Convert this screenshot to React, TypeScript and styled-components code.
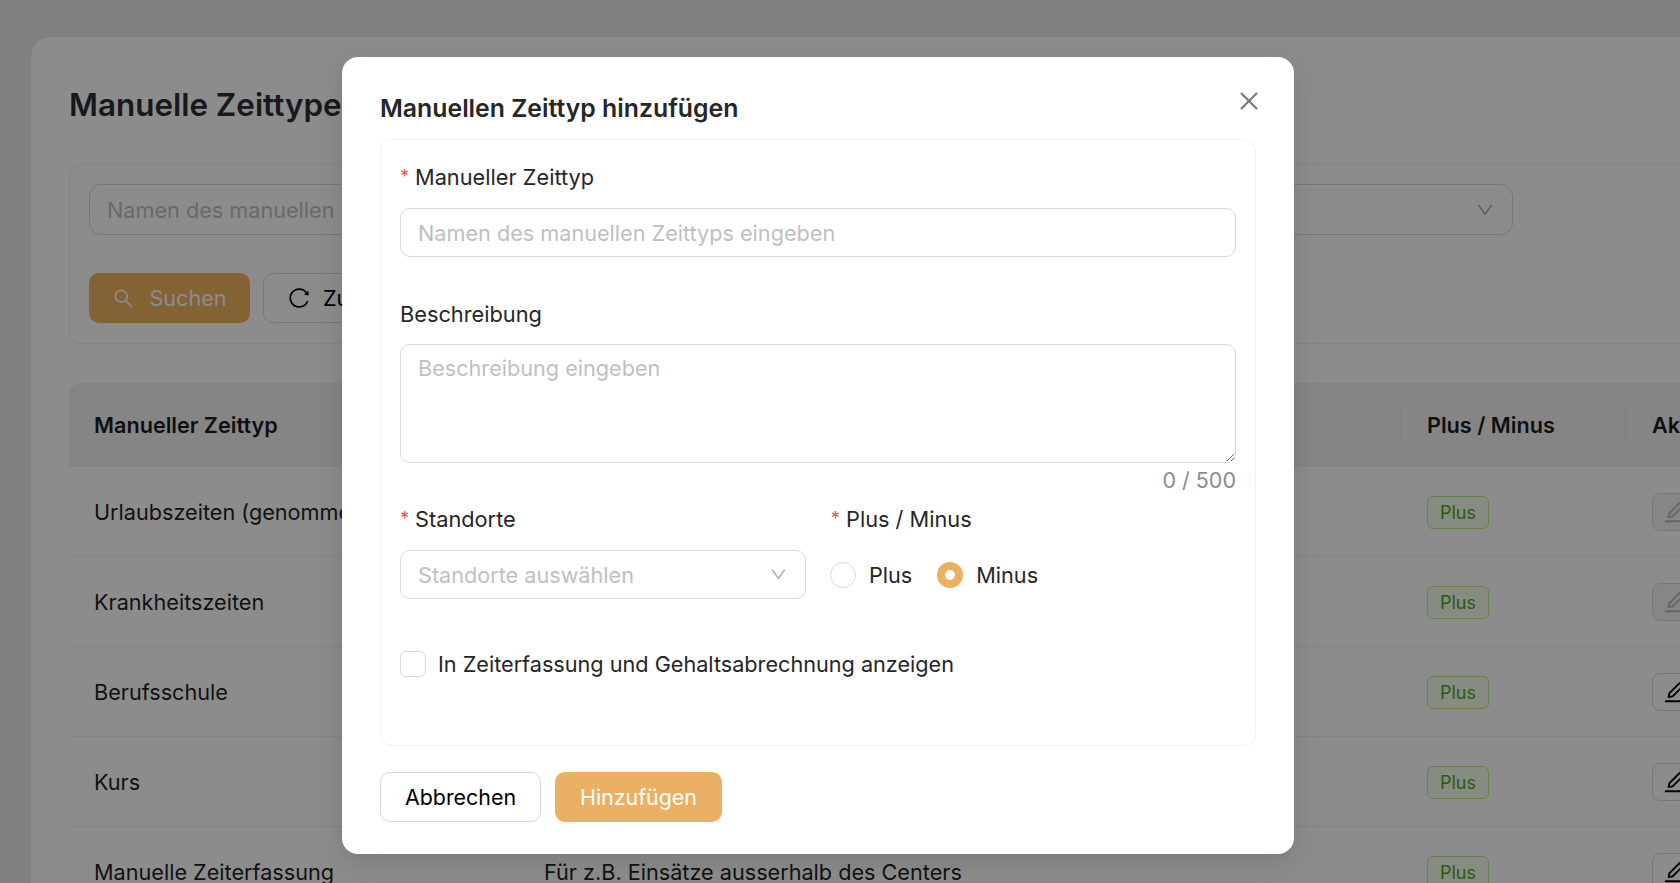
import React from 'react';
import styled, { createGlobalStyle } from 'styled-components';
import { AiOutlineClose, AiOutlineDown, AiOutlineEdit, AiOutlineReload, AiOutlineSearch } from 'react-icons/ai';

const Global = createGlobalStyle`
  html, body { margin: 0; padding: 0; height: 883px; overflow: hidden; background: #e9e9e9; }
  * { box-sizing: border-box; }
  body { font-family: Inter, "Noto Sans", "Liberation Sans", sans-serif; color: #1f1f1f; -webkit-font-smoothing: antialiased; }
  #root { width: 1680px; height: 883px; overflow: hidden; position: relative; }
`;

const Page = styled.main`
  width: 1900px;
  padding: 37px 0 0 31px;
`;
const Card = styled.section`
  background: #fff;
  border-radius: 20px;
  padding: 0 0 0 38px;
  height: 900px;
`;
const PageTitle = styled.h1`
  margin: 0;
  padding: 48px 0 0;
  height: 127px;
  font-size: 31.4px;
  line-height: 40px;
  font-weight: 600;
  color: #2b2f36;
`;
const FilterBox = styled.div`
  height: 180px;
  width: 1800px;
  border: 1px solid #f0f0f0;
  border-radius: 12px;
  padding: 19px;
  display: flex;
  flex-direction: column;
  gap: 38px;
`;
const FilterRow = styled.div`
  display: flex;
  gap: 13px;
  align-items: center;
`;
const FilterSelectSlot = styled.div`
  width: 1424px;
  height: 51px;
  border: 1px solid #d9d9d9;
  border-radius: 12px;
  display: flex;
  align-items: center;
  justify-content: space-between;
  padding: 0 17px;
  font-size: 21.65px;
  color: #bfbfbf;
  svg { width: 20px; height: 20px; color: #a8a8a8; }
`;
const PrimaryPageButton = styled.button`
  width: 161px;
  height: 50px;
  border: 0;
  border-radius: 10px;
  background: #eeb25f;
  color: #fff;
  font: inherit;
  font-size: 21.65px;
  display: flex;
  align-items: center;
  justify-content: center;
  gap: 14px;
  svg { width: 23px; height: 23px; }
`;
const GhostPageButton = styled.button`
  width: 240px;
  height: 50px;
  border: 1px solid #d9d9d9;
  border-radius: 10px;
  background: #fff;
  color: #000;
  font: inherit;
  font-size: 21.65px;
  white-space: nowrap;
  display: flex;
  align-items: center;
  gap: 12px;
  padding: 0 23px;
  svg { width: 24px; height: 24px; flex-shrink: 0; }
`;
const Table = styled.div`
  margin-top: 39px;
  width: 1800px;
`;
const columns = '450px 883px 225px 243px';
const HeadRow = styled.div`
  display: grid;
  grid-template-columns: ${columns};
  height: 84px;
  align-items: center;
  background: #f3f3f3;
  border-bottom: 1px solid #eee;
  border-radius: 12px 12px 0 0;
  font-size: 21.65px;
  font-weight: 600;
  color: #1c1c1c;
`;
const HeadCell = styled.div<{ $divider?: boolean }>`
  padding-left: 25px;
  position: relative;
  &::before {
    content: '';
    display: ${p => (p.$divider ? 'block' : 'none')};
    position: absolute;
    left: -2px;
    top: 50%;
    width: 1px;
    height: 36px;
    margin-top: -18px;
    background: #e6e6e6;
  }
`;
const Row = styled.div`
  display: grid;
  grid-template-columns: ${columns};
  height: 90px;
  align-items: center;
  border-bottom: 1px solid #f0f0f0;
  font-size: 21.65px;
  color: #1f1f1f;
`;
const Cell = styled.div`
  padding: 1px 0 0 25px;
  white-space: nowrap;
  overflow: hidden;
`;
const Tag = styled.span`
  display: inline-flex;
  align-items: center;
  justify-content: center;
  width: 62px;
  height: 33px;
  border: 1px solid #b7eb8f;
  border-radius: 6px;
  background: #f6ffed;
  color: #52a41a;
  font-size: 18px;
`;
const EditButton = styled.button<{ $disabled?: boolean }>`
  width: 46px;
  height: 38px;
  border: 1px solid #d9d9d9;
  border-radius: 8px;
  padding: 0;
  background: ${p => (p.$disabled ? '#f5f5f5' : '#fff')};
  color: ${p => (p.$disabled ? '#b8b8b8' : '#000')};
  display: flex;
  align-items: center;
  justify-content: center;
  svg { width: 26px; height: 26px; }
`;

const Overlay = styled.div`
  position: absolute;
  inset: 0;
  background: rgba(0, 0, 0, 0.45);
  padding: 57px 0 0 342px;
`;
const Modal = styled.div`
  position: relative;
  width: 952px;
  height: 797px;
  background: #fff;
  border-radius: 16px;
  padding: 33px 38px 0;
  box-shadow: 0 8px 28px rgba(0, 0, 0, 0.12);
`;
const CloseButton = styled.button`
  position: absolute;
  top: 31px;
  right: 32px;
  width: 26px;
  height: 26px;
  border: 0;
  padding: 0;
  background: none;
  color: #777;
  svg { width: 26px; height: 26px; display: block; }
`;
const ModalTitle = styled.h2`
  margin: 0;
  height: 49px;
  font-size: 24.8px;
  line-height: 36px;
  font-weight: 600;
  color: #262626;
`;
const FormCard = styled.div`
  height: 607px;
  border: 1px solid #f2f2f2;
  border-radius: 12px;
  padding: 19px 19px 0;
  display: flex;
  flex-direction: column;
`;
const Label = styled.div<{ $required?: boolean }>`
  height: 36px;
  font-size: 21.75px;
  line-height: 36px;
  color: #262626;
  display: flex;
  &::before {
    content: '*';
    display: ${p => (p.$required ? 'block' : 'none')};
    color: #ff4d4f;
    font-size: 18px;
    width: 15px;
  }
`;
const TextInput = styled.input`
  display: block;
  width: 100%;
  height: 49px;
  margin-top: 13px;
  border: 1px solid #d9d9d9;
  border-radius: 10px;
  padding: 0 17px;
  font: inherit;
  font-size: 21.65px;
  outline: 0;
  &::placeholder { color: #bfbfbf; }
`;
const DescriptionLabel = styled(Label)`
  margin-top: 39px;
`;
const TextArea = styled.textarea`
  display: block;
  width: 100%;
  height: 119px;
  margin-top: 12px;
  border: 1px solid #d9d9d9;
  border-radius: 10px;
  padding: 10px 17px;
  font: inherit;
  font-size: 21.65px;
  outline: 0;
  resize: vertical;
  &::placeholder { color: #bfbfbf; }
`;
const Counter = styled.div`
  height: 34px;
  text-align: right;
  font-size: 21.5px;
  line-height: 34px;
  color: #8c8c8c;
`;
const TwoColumns = styled.div`
  display: grid;
  grid-template-columns: 406px 1fr;
  column-gap: 25px;
  margin-top: 4px;
`;
const SelectField = styled.div`
  width: 406px;
  height: 49px;
  margin-top: 13px;
  border: 1px solid #d9d9d9;
  border-radius: 10px;
  padding: 0 17px;
  display: flex;
  align-items: center;
  justify-content: space-between;
  font-size: 21.65px;
  color: #bfbfbf;
  svg { width: 19px; height: 19px; color: #a8a8a8; }
`;
const RadioGroup = styled.div`
  display: flex;
  align-items: center;
  height: 49px;
  margin: 13px 0 0 -1px;
  gap: 25px;
`;
const RadioOption = styled.label`
  display: flex;
  align-items: center;
  gap: 13px;
  font-size: 21.65px;
  color: #262626;
`;
const RadioDot = styled.span<{ $checked?: boolean }>`
  width: 26px;
  height: 26px;
  border-radius: 50%;
  background: #fff;
  border: ${p => (p.$checked ? '8px solid #ebb064' : '1px solid #d9d9d9')};
`;
const CheckRow = styled.label`
  display: flex;
  align-items: center;
  gap: 12px;
  margin-top: 52px;
  font-size: 21.65px;
  color: #262626;
`;
const CheckBox = styled.span`
  width: 26px;
  height: 26px;
  border: 1px solid #d9d9d9;
  border-radius: 6px;
  background: #fff;
`;
const Footer = styled.div`
  display: flex;
  gap: 14px;
  margin-top: 26px;
`;
const CancelButton = styled.button`
  width: 161px;
  height: 50px;
  border: 1px solid #d9d9d9;
  border-radius: 10px;
  background: #fff;
  color: #000;
  font: inherit;
  font-size: 21.4px;
  box-shadow: 0 2px 0 rgba(0, 0, 0, 0.02);
`;
const SubmitButton = styled.button`
  width: 167px;
  height: 50px;
  border: 0;
  border-radius: 10px;
  background: #ebb064;
  color: #fff;
  font: inherit;
  font-size: 21.4px;
`;

const rows = [
  { name: 'Urlaubszeiten (genommen)', desc: '', locked: true },
  { name: 'Krankheitszeiten', desc: '', locked: true },
  { name: 'Berufsschule', desc: '', locked: false },
  { name: 'Kurs', desc: '', locked: false },
  { name: 'Manuelle Zeiterfassung', desc: 'Für z.B. Einsätze ausserhalb des Centers', locked: false },
];

export default function App() {
  return (
    <>
      <Global />
      <Page>
        <Card>
          <PageTitle>Manuelle Zeittypen</PageTitle>
          <FilterBox>
            <FilterRow>
              <FilterSelectSlot>
                <span>Namen des manuellen Zeittyps eingeben</span>
                <AiOutlineDown />
              </FilterSelectSlot>
            </FilterRow>
            <FilterRow>
              <PrimaryPageButton><AiOutlineSearch />Suchen</PrimaryPageButton>
              <GhostPageButton><AiOutlineReload />Zurücksetzen</GhostPageButton>
            </FilterRow>
          </FilterBox>
          <Table>
            <HeadRow>
              <HeadCell>Manueller Zeittyp</HeadCell>
              <HeadCell $divider>Beschreibung</HeadCell>
              <HeadCell $divider>Plus / Minus</HeadCell>
              <HeadCell $divider>Aktionen</HeadCell>
            </HeadRow>
            {rows.map(r => (
              <Row key={r.name}>
                <Cell>{r.name}</Cell>
                <Cell>{r.desc}</Cell>
                <Cell><Tag>Plus</Tag></Cell>
                <Cell>
                  <EditButton $disabled={r.locked}><AiOutlineEdit /></EditButton>
                </Cell>
              </Row>
            ))}
          </Table>
        </Card>
      </Page>
      <Overlay>
        <Modal>
          <CloseButton aria-label="Schließen"><AiOutlineClose /></CloseButton>
          <ModalTitle>Manuellen Zeittyp hinzufügen</ModalTitle>
          <FormCard>
            <Label $required>Manueller Zeittyp</Label>
            <TextInput placeholder="Namen des manuellen Zeittyps eingeben" />
            <DescriptionLabel>Beschreibung</DescriptionLabel>
            <TextArea placeholder="Beschreibung eingeben" />
            <Counter>0 / 500</Counter>
            <TwoColumns>
              <div>
                <Label $required>Standorte</Label>
                <SelectField>
                  <span>Standorte auswählen</span>
                  <AiOutlineDown />
                </SelectField>
              </div>
              <div>
                <Label $required>Plus / Minus</Label>
                <RadioGroup>
                  <RadioOption><RadioDot />Plus</RadioOption>
                  <RadioOption><RadioDot $checked />Minus</RadioOption>
                </RadioGroup>
              </div>
            </TwoColumns>
            <CheckRow><CheckBox />In Zeiterfassung und Gehaltsabrechnung anzeigen</CheckRow>
          </FormCard>
          <Footer>
            <CancelButton>Abbrechen</CancelButton>
            <SubmitButton>Hinzufügen</SubmitButton>
          </Footer>
        </Modal>
      </Overlay>
    </>
  );
}
